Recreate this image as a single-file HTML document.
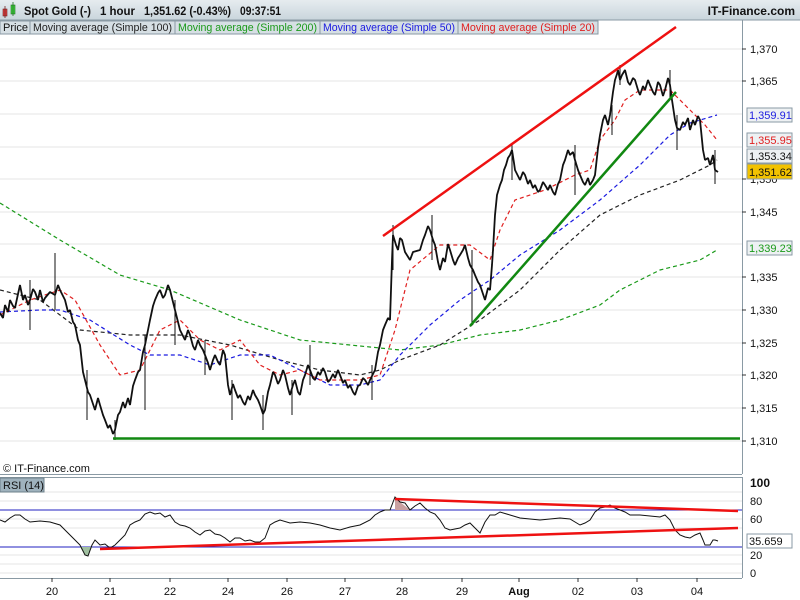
<!DOCTYPE html>
<html><head><meta charset="utf-8"><style>
body{margin:0;width:800px;height:600px;overflow:hidden;background:#fff;font-family:"Liberation Sans",sans-serif}
svg{display:block}
text{font-family:"Liberation Sans",sans-serif}
</style></head><body>
<svg width="800" height="600" viewBox="0 0 800 600" xmlns="http://www.w3.org/2000/svg">
<defs><linearGradient id="hg" x1="0" y1="0" x2="0" y2="1"><stop offset="0" stop-color="#e6ecef"/><stop offset="1" stop-color="#c9d5dc"/></linearGradient></defs>
<rect x="0" y="0" width="800" height="20" fill="url(#hg)"/>
<line x1="0" y1="20" x2="800" y2="20" stroke="#8a9aa4"/>
<rect x="3" y="9" width="4" height="7" fill="#e04040" stroke="#702020" stroke-width="0.6"/><line x1="5" y1="6" x2="5" y2="18" stroke="#702020" stroke-width="0.8"/>
<rect x="11" y="5" width="4" height="9" fill="#40d040" stroke="#207020" stroke-width="0.6"/><line x1="13" y1="2" x2="13" y2="16" stroke="#207020" stroke-width="0.8"/>
<g font-size="12" font-weight="bold" fill="#111">
<text x="24" y="15" textLength="67" lengthAdjust="spacingAndGlyphs">Spot Gold (-)</text><text x="100" y="15" textLength="35" lengthAdjust="spacingAndGlyphs">1 hour</text><text x="144" y="15" textLength="87" lengthAdjust="spacingAndGlyphs">1,351.62 (-0.43%)</text><text x="240" y="15" textLength="41" lengthAdjust="spacingAndGlyphs">09:37:51</text>
</g>
<text x="795" y="15" font-size="12" font-weight="bold" fill="#111" text-anchor="end">IT-Finance.com</text>
<line x1="742.5" y1="20" x2="742.5" y2="578" stroke="#8a9aa4"/>
<g stroke="#e4e4e4">
<line x1="0" y1="49" x2="742" y2="49"/><line x1="0" y1="81" x2="742" y2="81"/><line x1="0" y1="114" x2="742" y2="114"/><line x1="0" y1="147" x2="742" y2="147"/><line x1="0" y1="179" x2="742" y2="179"/><line x1="0" y1="212" x2="742" y2="212"/><line x1="0" y1="244" x2="742" y2="244"/><line x1="0" y1="277" x2="742" y2="277"/><line x1="0" y1="310" x2="742" y2="310"/><line x1="0" y1="343" x2="742" y2="343"/><line x1="0" y1="375" x2="742" y2="375"/><line x1="0" y1="408" x2="742" y2="408"/><line x1="0" y1="441" x2="742" y2="441"/>
</g>
<g font-size="11">
<rect x="0" y="21" width="30" height="13" fill="#d6dfe4" stroke="#8a9aa4"/><text x="3" y="31" fill="#111" textLength="25">Price</text>
<rect x="30" y="21" width="145" height="13" fill="#d6dfe4" stroke="#8a9aa4"/><text x="33" y="31" fill="#222" textLength="139" lengthAdjust="spacingAndGlyphs">Moving average (Simple 100)</text>
<rect x="175" y="21" width="145" height="13" fill="#d6dfe4" stroke="#8a9aa4"/><text x="178" y="31" fill="#1a9a1a" textLength="139" lengthAdjust="spacingAndGlyphs">Moving average (Simple 200)</text>
<rect x="320" y="21" width="138" height="13" fill="#d6dfe4" stroke="#8a9aa4"/><text x="323" y="31" fill="#1a1ae0" textLength="132" lengthAdjust="spacingAndGlyphs">Moving average (Simple 50)</text>
<rect x="458" y="21" width="140" height="13" fill="#d6dfe4" stroke="#8a9aa4"/><text x="461" y="31" fill="#e02020" textLength="134" lengthAdjust="spacingAndGlyphs">Moving average (Simple 20)</text>
</g>
<g font-size="11" fill="#111">
<line x1="742" y1="49" x2="746" y2="49" stroke="#333"/><text x="750" y="53">1,370</text>
<line x1="742" y1="81" x2="746" y2="81" stroke="#333"/><text x="750" y="85">1,365</text>
<line x1="742" y1="179" x2="746" y2="179" stroke="#333"/><text x="750" y="183">1,350</text>
<line x1="742" y1="212" x2="746" y2="212" stroke="#333"/><text x="750" y="216">1,345</text>
<line x1="742" y1="277" x2="746" y2="277" stroke="#333"/><text x="750" y="281">1,335</text>
<line x1="742" y1="310" x2="746" y2="310" stroke="#333"/><text x="750" y="314">1,330</text>
<line x1="742" y1="343" x2="746" y2="343" stroke="#333"/><text x="750" y="347">1,325</text>
<line x1="742" y1="375" x2="746" y2="375" stroke="#333"/><text x="750" y="379">1,320</text>
<line x1="742" y1="408" x2="746" y2="408" stroke="#333"/><text x="750" y="412">1,315</text>
<line x1="742" y1="441" x2="746" y2="441" stroke="#333"/><text x="750" y="445">1,310</text>
</g>
<g font-size="11">
<rect x="747" y="108" width="45" height="14" fill="#eef1f3" stroke="#8a9aa4"/><text x="749" y="119" fill="#2020e0">1,359.91</text>
<rect x="747" y="133" width="45" height="14" fill="#eef1f3" stroke="#8a9aa4"/><text x="749" y="144" fill="#e02020">1,355.95</text>
<rect x="747" y="149" width="45" height="14" fill="#eef1f3" stroke="#8a9aa4"/><text x="749" y="160" fill="#111">1,353.34</text>
<rect x="747" y="164" width="45" height="15" fill="#f2c200" stroke="#8a9aa4"/><text x="749" y="176" fill="#111">1,351.62</text>
<rect x="747" y="241" width="45" height="14" fill="#eef1f3" stroke="#8a9aa4"/><text x="749" y="252" fill="#1a9a1a">1,339.23</text>
</g>
<g fill="none" stroke-width="1.2" stroke-dasharray="4,3">
<polyline stroke="#1a9a1a" points="0,203 60,240 120,275 170,290 240,320 300,340 350,345 380,348 400,350 440,345 480,335 520,330 560,320 600,305 620,290 660,270 700,260 717,250"/>
<polyline stroke="#222" points="0,290 40,300 80,330 130,335 180,335 230,345 280,360 320,370 360,375 380,370 400,360 440,345 480,320 520,290 560,250 600,215 640,195 680,180 710,165 717,160"/>
<polyline stroke="#1a1ae0" points="0,312 40,310 60,310 90,320 130,345 150,355 180,355 210,365 240,355 270,355 300,370 330,385 360,385 380,380 400,355 430,325 460,300 490,280 520,255 560,230 600,200 640,165 670,135 690,123 717,115"/>
<polyline stroke="#e02020" points="0,315 30,300 60,290 75,300 100,345 120,375 140,370 160,330 180,320 200,340 220,350 240,340 260,365 280,375 300,370 320,380 360,380 380,375 395,330 410,270 440,245 470,245 490,260 500,230 515,200 545,190 575,175 590,170 600,140 615,120 625,100 640,90 670,90 690,110 705,125 717,140"/>
</g>
<polyline fill="none" stroke="#111" stroke-width="1.8" stroke-linejoin="bevel" points="0,313 3,318 5,305 8,312 10,300 13,306 15,308 18,294 20,285 23,300 25,295 28,305 30,300 33,289 35,292 38,300 40,290 43,302 45,298 50,292 55,295 58,285 60,290 63,296 65,300 68,312 70,310 73,322 75,325 78,340 80,345 83,372 85,380 88,392 90,395 93,404 95,410 98,398 100,405 103,415 105,420 108,428 110,425 113,434 115,430 118,415 120,412 123,402 125,408 128,398 130,405 133,386 135,380 138,372 140,370 143,352 145,345 148,330 150,320 153,306 155,300 158,293 160,290 163,298 165,295 168,285 170,290 173,302 175,310 178,322 180,330 183,336 185,340 188,330 190,335 193,346 195,350 198,340 200,345 203,350 205,355 208,363 210,370 213,360 215,355 218,362 220,365 223,350 225,355 228,385 230,395 233,384 235,390 238,398 240,395 243,402 245,405 248,396 250,400 253,390 255,395 258,400 260,405 263,414 265,410 268,392 270,385 273,372 275,375 278,384 280,380 283,370 285,375 288,388 290,395 293,385 295,380 298,392 300,395 303,380 305,375 308,365 310,370 313,378 315,380 318,372 320,375 323,368 325,372 328,382 330,380 333,374 335,378 338,370 340,375 343,383 345,380 348,388 350,385 353,392 355,395 358,386 360,385 363,378 365,380 368,385 370,380 373,374 375,370 378,352 380,345 383,330 385,325 388,318 390,320 392,260 393,235 396,245 398,250 400,238 402,240 405,252 410,260 413,252 420,250 423,240 425,235 428,226 430,230 433,240 435,245 438,262 440,270 443,258 445,262 448,244 450,250 453,260 455,265 458,258 460,255 463,250 465,245 468,258 470,265 473,270 475,275 478,282 480,285 483,294 485,300 488,288 490,290 492,265 493,250 495,215 497,195 500,185 502,180 504,170 506,165 508,158 510,155 512,150 514,163 515,170 518,176 520,180 523,172 525,175 528,184 530,180 533,188 535,185 538,192 540,190 543,182 545,185 548,190 550,185 553,192 555,195 558,184 560,180 563,165 565,160 568,150 570,155 573,152 575,160 578,170 580,175 583,182 585,185 588,178 590,185 593,180 595,175 598,148 600,135 603,120 605,115 608,125 610,115 613,92 615,80 617,74 618,70 620,80 622,75 625,70 628,82 630,85 633,78 635,80 638,90 640,95 643,86 645,90 648,80 650,85 653,92 655,95 658,82 660,85 663,96 665,90 668,78 670,85 672,100 675,120 677,128 680,130 683,122 685,125 688,118 690,130 693,120 695,125 698,116 700,120 703,150 705,160 708,158 710,165 713,155 715,170 718,172"/>
<g stroke="#111" stroke-width="1">
<line x1="55" y1="253" x2="55" y2="310"/><line x1="30" y1="280" x2="30" y2="330"/><line x1="87" y1="370" x2="87" y2="420"/><line x1="115" y1="420" x2="115" y2="440"/><line x1="145" y1="335" x2="145" y2="410"/><line x1="175" y1="300" x2="175" y2="345"/><line x1="205" y1="340" x2="205" y2="375"/><line x1="232" y1="380" x2="232" y2="420"/><line x1="263" y1="395" x2="263" y2="430"/><line x1="292" y1="380" x2="292" y2="415"/><line x1="310" y1="345" x2="310" y2="385"/><line x1="372" y1="365" x2="372" y2="400"/><line x1="393" y1="225" x2="393" y2="270"/><line x1="432" y1="215" x2="432" y2="260"/><line x1="472" y1="250" x2="472" y2="325"/><line x1="512" y1="143" x2="512" y2="180"/><line x1="575" y1="145" x2="575" y2="195"/><line x1="612" y1="105" x2="612" y2="135"/><line x1="620" y1="65" x2="620" y2="85"/><line x1="670" y1="70" x2="670" y2="100"/><line x1="677" y1="115" x2="677" y2="150"/><line x1="715" y1="150" x2="715" y2="184"/>
</g>
<line x1="383" y1="236" x2="676" y2="27" stroke="#ee1111" stroke-width="2.5"/>
<line x1="470" y1="326" x2="676" y2="92" stroke="#118811" stroke-width="2.5"/>
<line x1="113" y1="438.5" x2="740" y2="438.5" stroke="#118811" stroke-width="2.5"/>
<text x="3" y="472" font-size="11" fill="#111">© IT-Finance.com</text>
<rect x="0" y="474" width="800" height="3" fill="#fff"/>
<line x1="0" y1="474.5" x2="742" y2="474.5" stroke="#8a9aa4"/>
<line x1="0" y1="477.5" x2="742" y2="477.5" stroke="#8a9aa4"/>
<g stroke="#e4e4e4"><line x1="0" y1="492" x2="742" y2="492"/><line x1="0" y1="501" x2="742" y2="501"/><line x1="0" y1="519" x2="742" y2="519"/><line x1="0" y1="528" x2="742" y2="528"/><line x1="0" y1="555" x2="742" y2="555"/><line x1="0" y1="564" x2="742" y2="564"/><line x1="0" y1="573" x2="742" y2="573"/></g>
<line x1="0" y1="510" x2="742" y2="510" stroke="#2020c0"/>
<line x1="0" y1="547" x2="742" y2="547" stroke="#2020c0"/>
<path d="M395,497 L400,502 L410,510 L395,510 Z" fill="#c9a0a0"/>
<path d="M80,547 L85,555 L88,556 L92,547 Z" fill="#a0c0a0"/>
<polyline fill="none" stroke="#111" stroke-width="1" points="0,520 5,522 10,518 15,515 20,515 25,519 30,522 40,521 50,522 60,525 65,530 70,535 75,540 80,545 85,555 88,556 92,545 95,540 100,545 105,544 110,548 115,545 120,540 125,535 130,525 135,522 140,520 145,514 150,512 155,514 160,513 165,517 170,515 175,522 180,525 185,526 190,528 195,532 200,535 205,531 210,530 215,534 220,535 225,538 230,542 235,538 240,538 245,541 250,540 255,542 260,542 265,538 270,525 275,522 280,520 290,523 300,522 310,523 320,525 330,528 340,530 350,527 360,525 370,520 375,515 380,512 385,510 390,510 395,497 400,502 405,503 410,510 415,506 420,503 425,508 430,512 435,514 440,520 445,528 450,530 455,529 460,528 465,525 470,523 475,528 480,533 485,522 490,515 495,515 500,512 510,515 520,518 530,519 540,520 550,519 560,518 570,519 580,525 585,523 590,520 595,512 600,508 605,507 610,505 615,508 620,510 625,512 630,515 640,515 650,516 660,517 665,515 670,520 675,530 680,535 685,537 690,538 695,535 700,533 703,540 705,545 710,545 713,540 715,540 718,541"/>
<line x1="395" y1="499" x2="738" y2="511" stroke="#ee1111" stroke-width="2.5"/>
<line x1="100" y1="549" x2="738" y2="528" stroke="#ee1111" stroke-width="2.5"/>
<rect x="0" y="478" width="44" height="14" fill="#9fb2bd" stroke="#6e808a"/>
<text x="3" y="489" font-size="11" fill="#111">RSI (14)</text>
<g font-size="11" fill="#111">
<text x="750" y="487" font-weight="bold" font-size="12">100</text>
<text x="750" y="505">80</text><text x="750" y="523">60</text><text x="750" y="559">20</text><text x="750" y="577">0</text>
</g>
<rect x="747" y="534" width="45" height="14" fill="#fff" stroke="#8a9aa4"/><text x="749" y="545" font-size="11" fill="#111">35.659</text>
<line x1="0" y1="578.5" x2="742" y2="578.5" stroke="#8a9aa4"/>
<g font-size="11" fill="#111" text-anchor="middle">
<text x="52" y="595">20</text><text x="110" y="595">21</text><text x="170" y="595">22</text><text x="228" y="595">24</text><text x="287" y="595">26</text><text x="345" y="595">27</text><text x="402" y="595">28</text><text x="462" y="595">29</text><text x="519" y="595" font-weight="bold">Aug</text><text x="578" y="595">02</text><text x="637" y="595">03</text><text x="697" y="595">04</text>
</g>
<g stroke="#333"><line x1="52" y1="578" x2="52" y2="582"/><line x1="110" y1="578" x2="110" y2="582"/><line x1="170" y1="578" x2="170" y2="582"/><line x1="228" y1="578" x2="228" y2="582"/><line x1="287" y1="578" x2="287" y2="582"/><line x1="345" y1="578" x2="345" y2="582"/><line x1="402" y1="578" x2="402" y2="582"/><line x1="462" y1="578" x2="462" y2="582"/><line x1="519" y1="578" x2="519" y2="582"/><line x1="578" y1="578" x2="578" y2="582"/><line x1="637" y1="578" x2="637" y2="582"/><line x1="697" y1="578" x2="697" y2="582"/></g>
</svg>
</body></html>
